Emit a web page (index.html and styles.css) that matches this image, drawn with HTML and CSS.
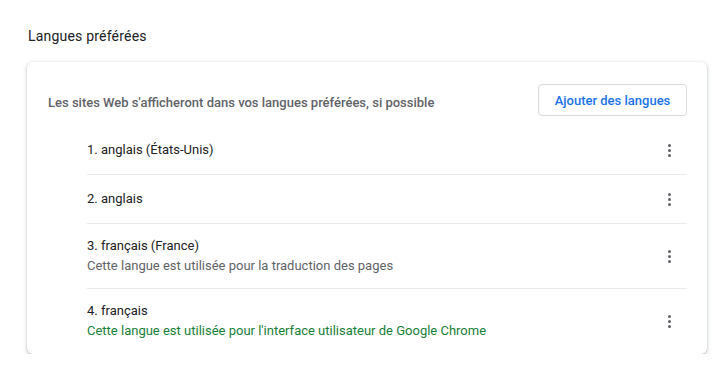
FILE: index.html
```html
<!DOCTYPE html>
<html lang="fr">

<head>
  <meta charset="UTF-8" />
  <title>Langues</title>
  <link rel="stylesheet" href="styles.css">
</head>

<body>
  <div class="page">
    <h2 class="section-title">Langues préférées</h2>

    <div class="card">
      <div class="card-header">
        <div class="card-label">Les sites Web s'afficheront dans vos langues préférées, si possible</div>
        <button class="add-btn">Ajouter des langues</button>
      </div>

      <!-- language list -->
      <div class="lang-list">
        <div class="lang-row">
          <div class="lang-info">
            <div class="lang-name">1. anglais (États-Unis)</div>
          </div>
          <span class="kebab"><i></i><i></i><i></i></span>
        </div>
        <div class="lang-row">
          <div class="lang-info">
            <div class="lang-name">2. anglais</div>
          </div>
          <span class="kebab"><i></i><i></i><i></i></span>
        </div>
        <div class="lang-row tall">
          <div class="lang-info">
            <div class="lang-name">3. français (France)</div>
            <div class="lang-note">Cette langue est utilisée pour la traduction des pages</div>
          </div>
          <span class="kebab"><i></i><i></i><i></i></span>
        </div>
        <div class="lang-row tall">
          <div class="lang-info">
            <div class="lang-name">4. français</div>
            <div class="lang-note green">Cette langue est utilisée pour l'interface utilisateur de Google Chrome</div>
          </div>
          <span class="kebab"><i></i><i></i><i></i></span>
        </div>
      </div>
    </div>
  </div>
</body>

</html>
```

FILE: styles.css
```css
body {
  margin: 0;
  background: #fff;
  font-family: Roboto, 'Liberation Sans', sans-serif;
  color: #202124;
}

.page {
  padding: 27px 11px 0 27px;
}

.section-title {
  margin: 0 0 17px 1px;
  font-size: 14px;
  font-weight: 400;
  line-height: 18px;
  letter-spacing: 0.2px;
  color: #202124;
}

.card {
  width: 680px;
  background: #fff;
  border-radius: 6px;
  box-shadow: 0 1px 2px rgba(60, 64, 67, 0.3), 0 1px 4px 1px rgba(60, 64, 67, 0.12);
  padding-bottom: 1px;
}

.card-header {
  display: flex;
  align-items: center;
  justify-content: space-between;
  padding: 22px 20px 10px 21px;
}

.card-label {
  padding-top: 5px;
  font-size: 13px;
  font-weight: 500;
  color: #5f6368;
}

.add-btn {
  height: 32px;
  width: 149px;
  padding: 0;
  background: #fff;
  border: 1px solid #dadce0;
  border-radius: 4px;
  font-family: inherit;
  font-size: 13px;
  font-weight: 500;
  color: #1a73e8;
  cursor: pointer;
}

.lang-list {
  margin: 0 20px 0 60px;
}

.lang-row {
  display: flex;
  align-items: center;
  justify-content: space-between;
  height: 48px;
  border-top: 1px solid #e8eaed;
}

.lang-row:first-child {
  border-top: none;
}

.lang-row.tall {
  height: 64px;
}

.lang-name {
  font-size: 13px;
  line-height: 20px;
  color: #202124;
}

.lang-note {
  font-size: 13px;
  line-height: 20px;
  color: #5f6368;
}

.lang-note.green {
  color: #188038;
}

.kebab {
  display: flex;
  flex-direction: column;
  align-items: center;
  gap: 2px;
  width: 36px;
  margin-right: 0;
}

.kebab i {
  width: 3px;
  height: 3px;
  border-radius: 50%;
  background: #5f6368;
}
```
